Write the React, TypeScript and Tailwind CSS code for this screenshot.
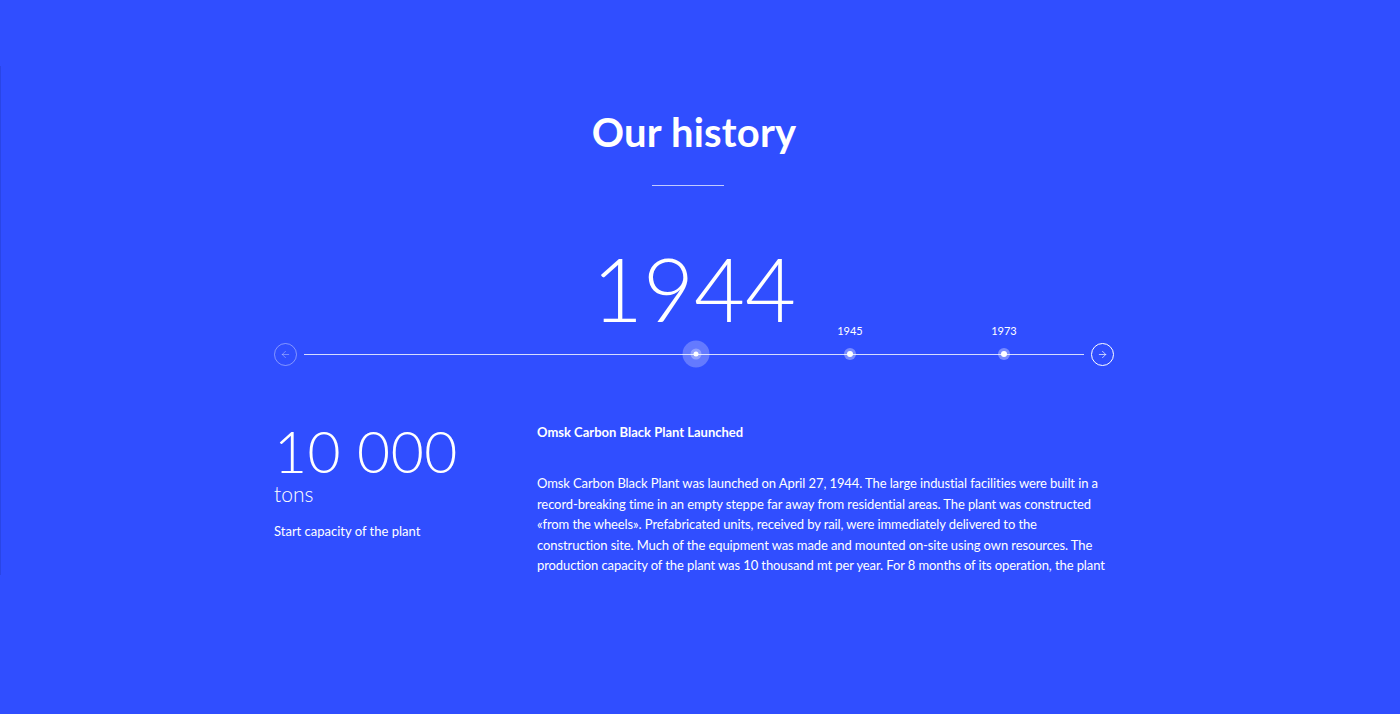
import React from "react";
import { ArrowLeft, ArrowRight } from "lucide-react";

const font = { fontFamily: "Lato, 'Noto Sans', 'Liberation Sans', sans-serif" };

export default function App() {
  return (
    <div className="relative w-full h-[714px] bg-[#304eff] text-white overflow-hidden" style={font}>
      <div className="absolute left-0 top-[66px] h-[509px] w-px bg-[#2a45e6]" />
      <div className="pr-[12px]">
        <div className="mx-auto w-[840px] pt-[108px] flex flex-col">
          <h1 className="text-center text-[40px] leading-[48px] font-bold tracking-[0.2px]">Our history</h1>
          <div className="mx-auto mt-[29px] h-px w-[72px] bg-white/70 -translate-x-[6px]" />
          <div className="mt-[58px] text-center text-[88px] leading-[88px] font-light">1944</div>

          <div className="mt-[-1px] flex items-center gap-[6px] h-[46px]">
            <button className="w-[23px] h-[23px] rounded-full border border-white/40 flex items-center justify-center text-white/50">
              <ArrowLeft size={11} strokeWidth={1.5} />
            </button>
            <div className="relative flex-1 h-px bg-white/80 mx-[1px]">
              <div className="absolute left-[392px] top-0 -translate-x-1/2 -translate-y-1/2 w-[27px] h-[27px] rounded-full bg-white/25 flex items-center justify-center">
                <div className="w-[11px] h-[11px] rounded-full bg-white/30 flex items-center justify-center">
                  <div className="w-[5px] h-[5px] rounded-full bg-white" />
                </div>
              </div>
              {[
                { x: 546, y: "1945" },
                { x: 700, y: "1973" },
              ].map((d) => (
                <div key={d.y} className="absolute top-0" style={{ left: d.x }}>
                  <div className="absolute left-0 -translate-x-1/2 -top-[29px] text-[11px] leading-[12px]">{d.y}</div>
                  <div className="absolute left-0 top-0 -translate-x-1/2 -translate-y-1/2 w-[12px] h-[12px] rounded-full bg-white/35 flex items-center justify-center">
                    <div className="w-[6px] h-[6px] rounded-full bg-white" />
                  </div>
                </div>
              ))}
            </div>
            <button className="w-[23px] h-[23px] rounded-full border border-white flex items-center justify-center text-white">
              <ArrowRight size={11} strokeWidth={1.5} />
            </button>
          </div>

          <div className="mt-[44px] flex">
            <div className="w-[263px] shrink-0">
              <div className="text-[57px] leading-[60px] font-light tracking-[0.5px]">10 000</div>
              <div className="text-[21px] leading-[26px] font-light">tons</div>
              <div className="mt-[15px] text-[13px] leading-[18px]">Start capacity of the plant</div>
            </div>
            <div className="w-[570px]">
              <div className="mt-[2px] text-[13px] leading-[18px] font-bold">Omsk Carbon Black Plant Launched</div>
              <div className="mt-[32px] h-[104px] overflow-hidden text-[13px] leading-[20.5px] tracking-[-0.1px]">
                Omsk Carbon Black Plant was launched on April 27, 1944. The large industial facilities were built in a record-breaking time in an empty steppe far away from residential areas. The plant was constructed «from the wheels». Prefabricated units, received by rail, were immediately delivered to the construction site. Much of the equipment was made and mounted on-site using own resources. The production capacity of the plant was 10 thousand mt per year. For 8 months of its operation, the plant produced carbon black for the needs of the front.
              </div>
            </div>
          </div>
        </div>
      </div>
    </div>
  );
}
